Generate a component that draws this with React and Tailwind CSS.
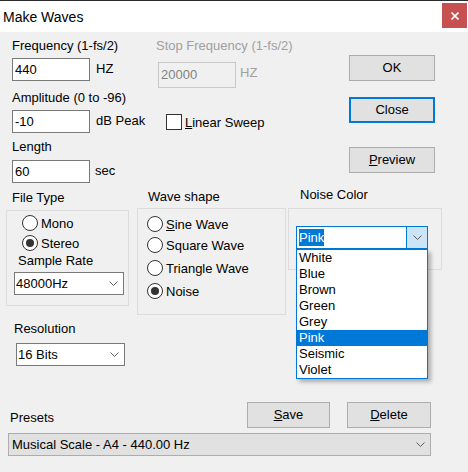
import React from "react"

const Chevron = ({ className = "" }) => (
  <svg width="9" height="5" viewBox="0 0 9 5" className={className}>
    <polyline points="0.5,0.5 4.5,4.5 8.5,0.5" fill="none" stroke="#606060" strokeWidth="1" />
  </svg>
)

function Radio({ checked, children, className = "" }) {
  return (
    <div className={`flex items-center h-[16px] ${className}`}>
      <span className="size-[16px] shrink-0 rounded-full border border-[#333333] bg-white flex items-center justify-center">
        {checked && <span className="size-[8px] rounded-full bg-[#333333]" />}
      </span>
      <span className="ml-[3px] leading-[15px] whitespace-nowrap">{children}</span>
    </div>
  )
}

function Field({ value, className = "" }) {
  return (
    <div className={`h-[23px] w-[78px] shrink-0 border border-[#7a7a7a] bg-white pl-[2px] leading-[21px] ${className}`}>
      {value}
    </div>
  )
}

function Button({ children, className = "", focused }) {
  return (
    <div
      className={`h-[26px] flex items-center justify-center bg-[#e1e1e1] ${
        focused ? "border-2 border-[#0078d7]" : "border border-[#adadad]"
      } ${className}`}
    >
      {children}
    </div>
  )
}

function Select({ value, className = "" }) {
  return (
    <div className={`h-[23px] flex items-center border border-[#7a7a7a] bg-white pl-[1px] pr-[5px] ${className}`}>
      <span className="flex-1 leading-[15px]">{value}</span>
      <Chevron />
    </div>
  )
}

const colors = ["White", "Blue", "Brown", "Green", "Grey", "Pink", "Seismic", "Violet"]

export default function App() {
  return (
    <div className="w-[468px] h-[472px] overflow-hidden text-[13px] text-black font-['Liberation_Sans',Arial,sans-serif]">
      {/* title bar */}
      <div className="h-[32px] bg-white border-t border-[#2b2b2b] flex">
        <span className="ml-[3px] mt-[8px] text-[14px] leading-[16px]">Make Waves</span>
        <div className="ml-auto mt-[2px] mr-[1px] w-[25px] h-[25px] bg-[#c75050] flex items-center justify-center">
          <svg width="8" height="8" viewBox="0 0 8 8">
            <path d="M0.5 0.5 L7.5 7.5 M7.5 0.5 L0.5 7.5" stroke="white" strokeWidth="1.6" />
          </svg>
        </div>
      </div>

      <div className="h-[440px] bg-[#f0f0f0] flex flex-col">
        {/* top section */}
        <div className="flex">
          <div className="pl-[12px] flex flex-col">
            <div className="flex mt-[6px]">
              <div className="w-[144px]">
                <div className="leading-[15px] whitespace-nowrap">Frequency (1-fs/2)</div>
                <div className="flex items-start mt-[5px]">
                  <Field value="440" />
                  <span className="ml-[6px] mt-[3px] leading-[15px]">HZ</span>
                </div>
              </div>
              <div>
                <div className="leading-[15px] text-[#a0a0a0] whitespace-nowrap">Stop Frequency (1-fs/2)</div>
                <div className="flex items-start mt-[9px] ml-[2px]">
                  <div className="h-[26px] w-[78px] border border-[#c8c8c8] pl-[2px] leading-[24px] text-[#838383]">20000</div>
                  <span className="ml-[4px] mt-[3px] leading-[15px] text-[#a0a0a0]">HZ</span>
                </div>
              </div>
            </div>

            <div className="mt-[2px] leading-[15px]">Amplitude (0 to -96)</div>
            <div className="flex items-start mt-[5px]">
              <Field value="-10" />
              <span className="ml-[6px] mt-[3px] w-[70px] leading-[15px] whitespace-nowrap">dB Peak</span>
              <div className="flex items-center mt-[4px]">
                <span className="size-[16px] border border-[#333333] bg-white" />
                <span className="ml-[3px] leading-[15px] whitespace-nowrap">
                  <u>L</u>inear Sweep
                </span>
              </div>
            </div>

            <div className="mt-[6px] leading-[15px]">Length</div>
            <div className="flex items-start mt-[6px]">
              <Field value="60" />
              <span className="ml-[5px] mt-[3px] leading-[15px]">sec</span>
            </div>
          </div>

          <div className="ml-auto mr-[33px] flex flex-col w-[86px]">
            <Button className="mt-[23px]">OK</Button>
            <Button className="mt-[16px]" focused>Close</Button>
            <Button className="mt-[24px]">
              <span><u>P</u>review</span>
            </Button>
          </div>
        </div>

        {/* group boxes */}
        <div className="flex items-start">
          <div className="ml-[6px] w-[123px] flex flex-col">
            <div className="pl-[6px] mt-[7px] leading-[15px]">File Type</div>
            <div className="mt-[5px] h-[96px] border border-[#dcdcdc] flex flex-col">
              <Radio className="ml-[15px] mt-[4px]">Mono</Radio>
              <Radio className="ml-[15px] mt-[4px]" checked>Stereo</Radio>
              <div className="ml-[11px] mt-[2px] leading-[15px]">Sample Rate</div>
              <Select value="48000Hz" className="ml-[7px] mt-[4px] w-[110px]" />
            </div>
            <div className="ml-[8px] mt-[15px] leading-[15px]">Resolution</div>
            <Select value="16 Bits" className="ml-[10px] mt-[7px] w-[109px]" />
          </div>

          <div className="ml-[8px] w-[149px] flex flex-col">
            <div className="pl-[11px] mt-[6px] leading-[15px]">Wave shape</div>
            <div className="mt-[4px] h-[107px] border border-[#dcdcdc] flex flex-col pl-[9px] pt-[7px]">
              <Radio><u>S</u>ine Wave</Radio>
              <Radio className="mt-[5px]">Square Wave</Radio>
              <Radio className="mt-[7px]">Triangle Wave</Radio>
              <Radio className="mt-[7px]" checked>Noise</Radio>
            </div>
          </div>

          <div className="ml-[2px] w-[154px] flex flex-col">
            <div className="pl-[12px] mt-[4px] leading-[15px]">Noise Color</div>
            <div className="mt-[6px] h-[62px] border border-[#dcdcdc]">
              <div className="relative ml-[7px] mt-[17px] w-[132px] h-[23px] border border-[#0078d7] bg-white flex">
                <div className="flex-1 pl-[2px] pt-[1px]">
                  <span className="inline-block h-[17px] leading-[17px] bg-[#0078d7] text-white">Pink</span>
                </div>
                <div className="w-[21px] border-l border-[#0078d7] bg-[#cce4f7] flex items-center justify-center">
                  <Chevron />
                </div>
                <div className="absolute z-10 left-[-1px] top-[22px] w-[132px] border border-[#0078d7] bg-white shadow-[3px_3px_4px_rgba(0,0,0,0.28)]">
                  {colors.map((c) => (
                    <div
                      key={c}
                      className={`h-[16px] leading-[16px] pl-[2px] ${c === "Pink" ? "bg-[#0078d7] text-white" : ""}`}
                    >
                      {c}
                    </div>
                  ))}
                </div>
              </div>
            </div>
          </div>
        </div>

        {/* presets */}
        <div className="flex items-start mt-[36px]">
          <div className="ml-[10px] mt-[8px] leading-[15px]">Presets</div>
          <Button className="ml-auto w-[83px]">
            <span><u>S</u>ave</span>
          </Button>
          <Button className="ml-[17px] mr-[37px] w-[84px]">
            <span><u>D</u>elete</span>
          </Button>
        </div>
        <div className="ml-[8px] mt-[5px] w-[423px] h-[23px] border border-[#adadad] bg-[#e1e1e1] flex items-center pl-[3px] pr-[5px]">
          <span className="flex-1 leading-[15px]">Musical Scale - A4 - 440.00 Hz</span>
          <Chevron />
        </div>
      </div>
    </div>
  )
}
